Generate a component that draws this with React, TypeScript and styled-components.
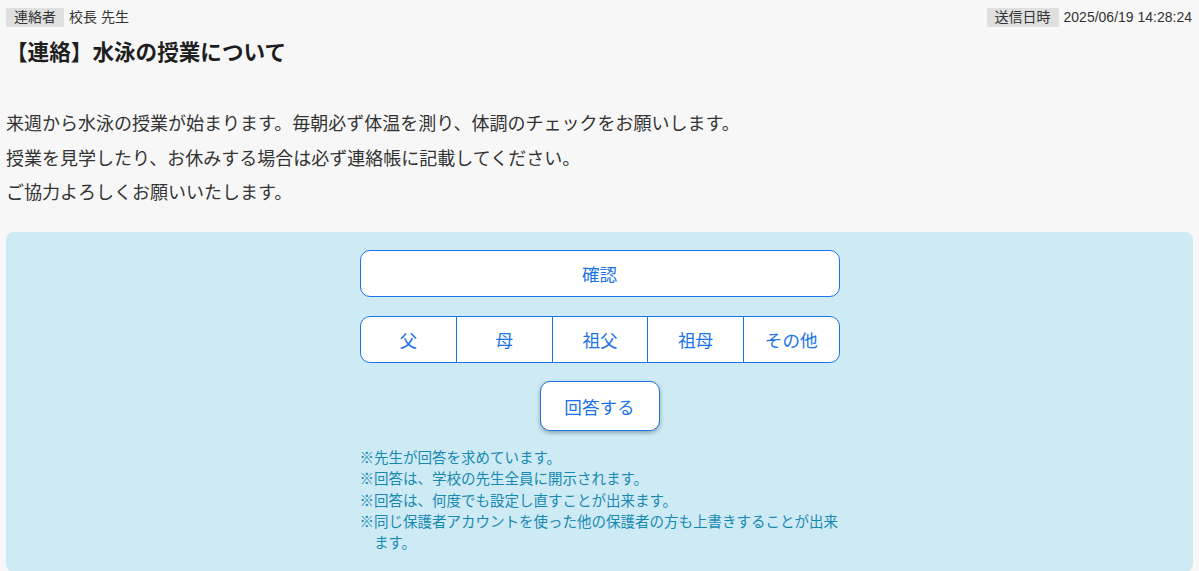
import styled, { createGlobalStyle } from 'styled-components';

const GlobalStyle = createGlobalStyle`
  html, body {
    margin: 0;
    padding: 0;
    background: #f7f7f7;
  }
  body {
    font-family: "Liberation Sans", "Noto Sans CJK JP", sans-serif;
    color: #333;
  }
`;

const options = ['父', '母', '祖父', '祖母', 'その他'];

const notes = [
  '※先生が回答を求めています。',
  '※回答は、学校の先生全員に開示されます。',
  '※回答は、何度でも設定し直すことが出来ます。',
  '※同じ保護者アカウントを使った他の保護者の方も上書きすることが出来ます。',
];

const App = () => {
  return (
    <Page>
      <GlobalStyle />
      <MetaRow>
        <MetaItem>
          <MetaLabel>連絡者</MetaLabel>
          <MetaValue>校長 先生</MetaValue>
        </MetaItem>
        <MetaItem>
          <MetaLabel>送信日時</MetaLabel>
          <MetaValue>2025/06/19 14:28:24</MetaValue>
        </MetaItem>
      </MetaRow>

      <Title>【連絡】水泳の授業について</Title>

      <Body>
        <p>来週から水泳の授業が始まります。毎朝必ず体温を測り、体調のチェックをお願いします。</p>
        <p>授業を見学したり、お休みする場合は必ず連絡帳に記載してください。</p>
        <p>ご協力よろしくお願いいたします。</p>
      </Body>

      <Panel>
        <Inner>
          <ConfirmButton>確認</ConfirmButton>
          <OptionGroup>
            {options.map((o) => (
              <Option key={o}>{o}</Option>
            ))}
          </OptionGroup>
          <AnswerButton>回答する</AnswerButton>
          <Notes>
            {notes.map((n) => (
              <Note key={n}>{n}</Note>
            ))}
          </Notes>
        </Inner>
      </Panel>
    </Page>
  );
};

const Page = styled.div`
  padding: 8px 6px 0;
`;

const MetaRow = styled.div`
  display: flex;
  justify-content: space-between;
  align-items: center;
  font-size: 14px;
  line-height: 19px;
  padding-right: 1px;
`;

const MetaItem = styled.div`
  display: flex;
  align-items: center;
`;

const MetaLabel = styled.span`
  background: #e0e0e0;
  padding: 0 8px;
  color: #333;
`;

const MetaValue = styled.span`
  margin-left: 5px;
  color: #333;
  font-size: 14px;
`;

const Title = styled.h1`
  margin: 11px 0 0;
  font-size: 21.6px;
  font-weight: bold;
  line-height: 30px;
  color: #1e1e1e;
`;

const Body = styled.div`
  margin-top: 39px;
  font-size: 18px;
  line-height: 34.7px;
  color: #333;

  p {
    margin: 0;
  }
`;

const Panel = styled.div`
  margin-top: 21px;
  background: #cdeaf5;
  border-radius: 8px;
  padding: 18px 0 17px;
  display: flex;
  justify-content: center;
`;

const Inner = styled.div`
  width: 480px;
  display: flex;
  flex-direction: column;
  align-items: center;
`;

const ConfirmButton = styled.div`
  box-sizing: border-box;
  width: 100%;
  height: 47px;
  display: flex;
  align-items: center;
  justify-content: center;
  background: #fff;
  border: 1px solid #1a73e8;
  border-radius: 10px;
  color: #1a73e8;
  font-size: 17.6px;
`;

const OptionGroup = styled.div`
  box-sizing: border-box;
  width: 100%;
  height: 47px;
  margin-top: 19px;
  display: grid;
  grid-template-columns: repeat(5, 1fr);
  background: #fff;
  border: 1px solid #1a73e8;
  border-radius: 10px;
  overflow: hidden;
`;

const Option = styled.div`
  display: flex;
  align-items: center;
  justify-content: center;
  color: #1a73e8;
  font-size: 17.6px;
  border-left: 1px solid #1a73e8;

  &:first-child {
    border-left: none;
  }
`;

const AnswerButton = styled.div`
  box-sizing: border-box;
  width: 120px;
  height: 50px;
  margin-top: 18px;
  display: flex;
  align-items: center;
  justify-content: center;
  background: #fff;
  border: 1px solid #1a73e8;
  border-radius: 10px;
  color: #1a73e8;
  font-size: 17.6px;
  box-shadow: 0 2px 4px rgba(0, 0, 0, 0.3);
`;

const Notes = styled.div`
  align-self: flex-start;
  width: 484px;
  margin-top: 17px;
  font-size: 14.5px;
  line-height: 21.3px;
  color: #1789b1;
`;

const Note = styled.div`
  padding-left: 1em;
  text-indent: -1em;
`;

export default App;
